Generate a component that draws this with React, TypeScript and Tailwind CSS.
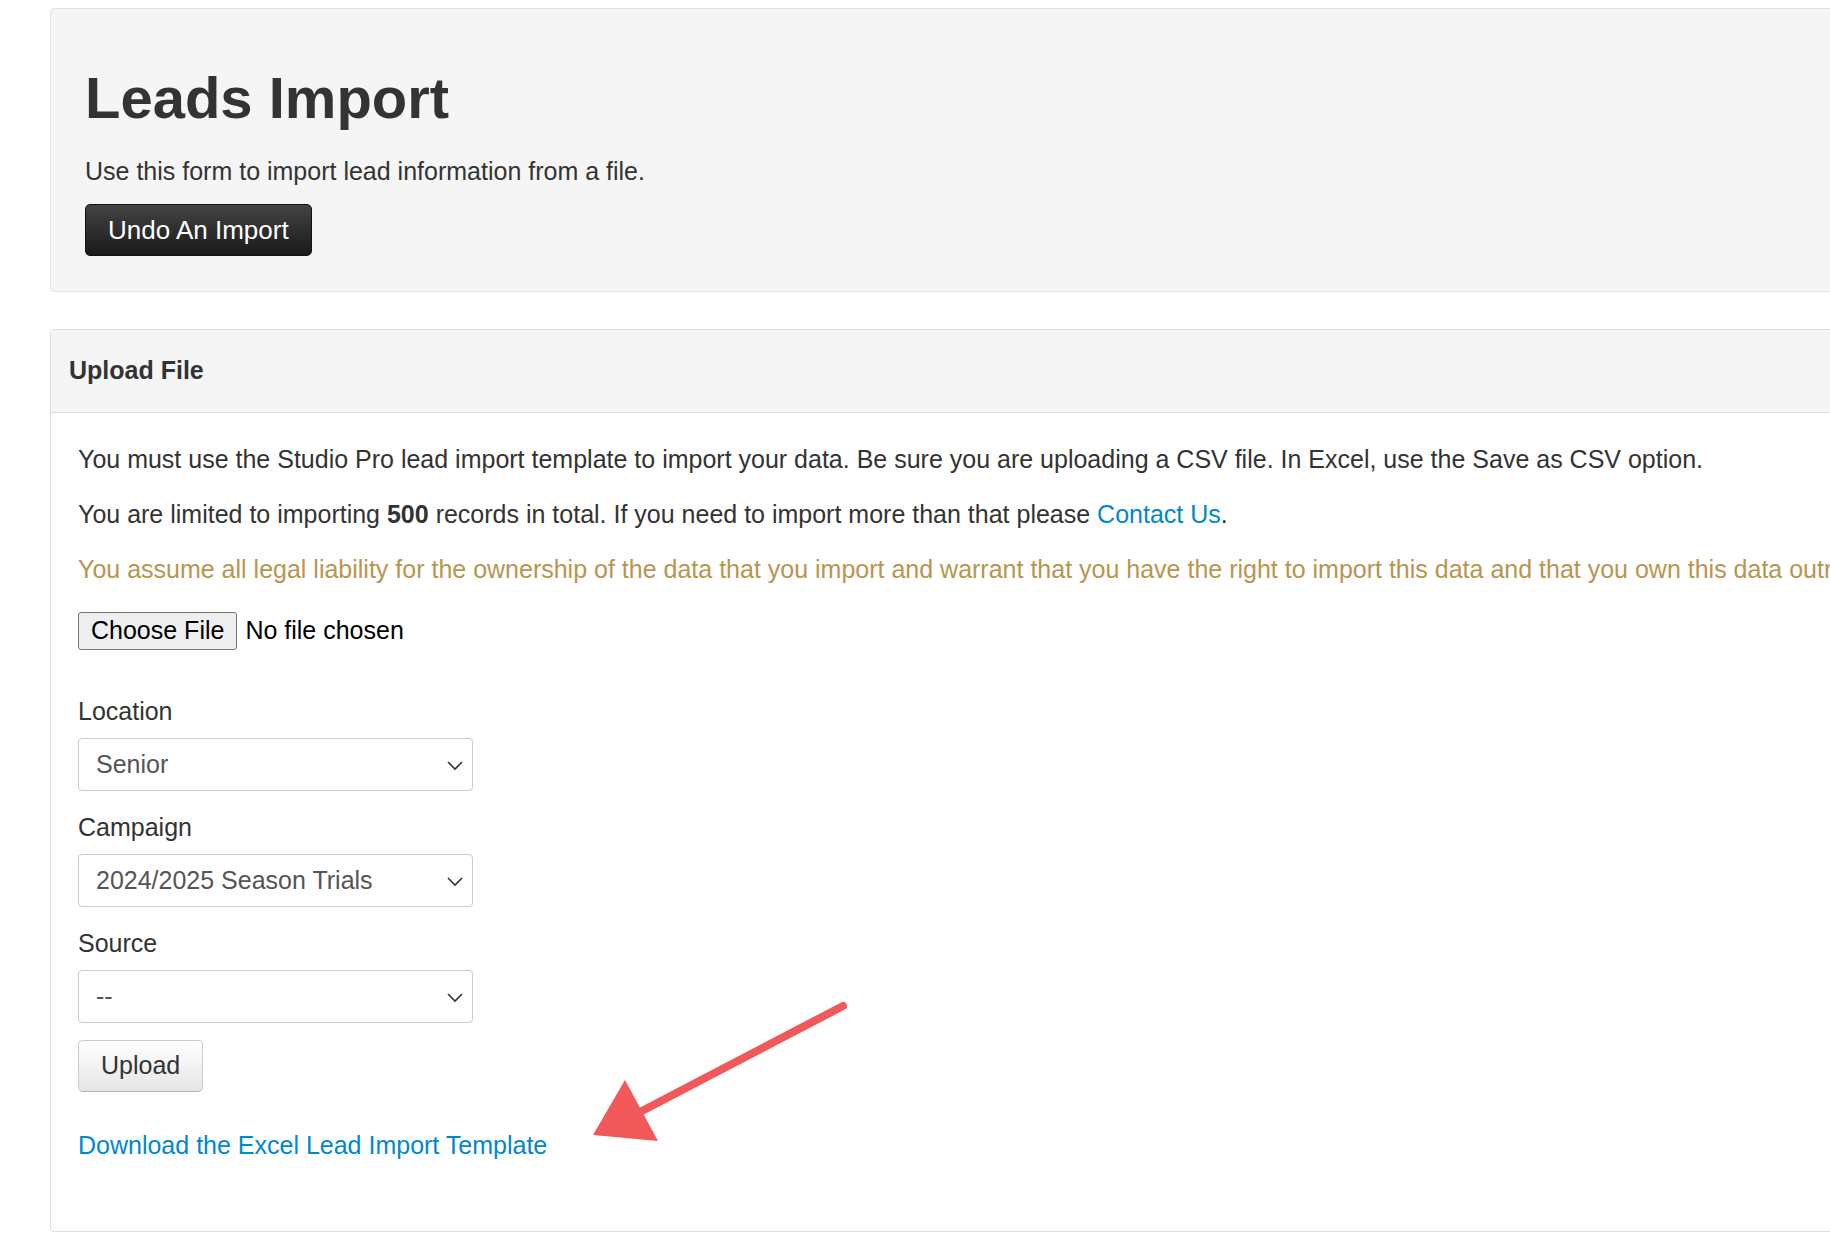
import React from "react";

const Chevron = () => (
  <svg width="18" height="12" viewBox="0 0 18 12" className="absolute right-[8px] top-1/2 -translate-y-1/2">
    <path d="M2 3 L9 10 L16 3" fill="none" stroke="#333" strokeWidth="1.6" />
  </svg>
);

const Select = ({ value }: { value: string }) => (
  <div className="relative w-[395px] h-[53px] border border-[#ccc] rounded-[4px] bg-white flex items-center pl-[17px] text-[25px] text-[#555]">
    {value}
    <Chevron />
  </div>
);

export default function App() {
  return (
    <div className="w-[1830px] h-[1252px] overflow-hidden bg-white text-[#333]" style={{ fontFamily: '"Liberation Sans", Arial, sans-serif' }}>
      <div className="ml-[50px] mt-[8px] w-[1820px] h-[284px] bg-[#f5f5f5] border border-[#e3e3e3] rounded-[4px] pl-[34px] pt-[54px]">
        <h1 className="text-[58px] font-bold leading-[70px] text-[#333]">Leads Import</h1>
        <p className="text-[25px] mt-[22px] leading-[32px]">Use this form to import lead information from a file.</p>
        <div className="mt-[17px] inline-flex items-center h-[52px] px-[22px] rounded-[5px] text-white text-[26px] bg-gradient-to-b from-[#444] to-[#1a1a1a] border border-[#111]">Undo An Import</div>
      </div>

      <div className="ml-[50px] mt-[37px] w-[1820px] h-[903px] border border-[#ddd] rounded-[4px]">
        <div className="h-[83px] bg-[#f5f5f5] border-b border-[#ddd] flex items-center pl-[18px] text-[25px] font-bold">Upload File</div>
        <div className="pl-[27px] pt-[28px] text-[25px]">
          <p className="leading-[36px] whitespace-nowrap">You must use the Studio Pro lead import template to import your data. Be sure you are uploading a CSV file. In Excel, use the Save as CSV option.</p>
          <p className="leading-[36px] mt-[19px]">You are limited to importing <b>500</b> records in total. If you need to import more than that please <span className="text-[#0088cc]">Contact Us</span>.</p>
          <p className="leading-[36px] mt-[19px] text-[#b8964f] whitespace-nowrap">You assume all legal liability for the ownership of the data that you import and warrant that you have the right to import this data and that you own this data outright.</p>
          <div className="flex items-center mt-[25px] h-[38px]">
            <div className="h-[38px] px-[12px] border border-[#767676] rounded-[3px] bg-[#efefef] flex items-center text-black">Choose File</div>
            <span className="ml-[8px] text-black">No file chosen</span>
          </div>
          <div className="mt-[46px] leading-[30px]">Location</div>
          <div className="mt-[12px]"><Select value="Senior" /></div>
          <div className="mt-[21px] leading-[30px]">Campaign</div>
          <div className="mt-[12px]"><Select value="2024/2025 Season Trials" /></div>
          <div className="mt-[21px] leading-[30px]">Source</div>
          <div className="mt-[12px]"><Select value="--" /></div>
          <div className="mt-[17px] inline-flex items-center h-[52px] px-[22px] rounded-[5px] border border-[#ccc] border-b-[#b3b3b3] bg-gradient-to-b from-white to-[#e6e6e6] text-[25px]">Upload</div>
          <div className="mt-[38px] text-[#0088cc] leading-[30px]">Download the Excel Lead Import Template</div>
        </div>
      </div>

      <svg className="absolute left-0 top-0 pointer-events-none" width="1830" height="1252">
        <line x1="843" y1="1006" x2="640" y2="1112" stroke="#f0585a" strokeWidth="8" strokeLinecap="round" />
        <polygon points="593,1135 625,1080 658,1141" fill="#f0585a" />
      </svg>
    </div>
  );
}
